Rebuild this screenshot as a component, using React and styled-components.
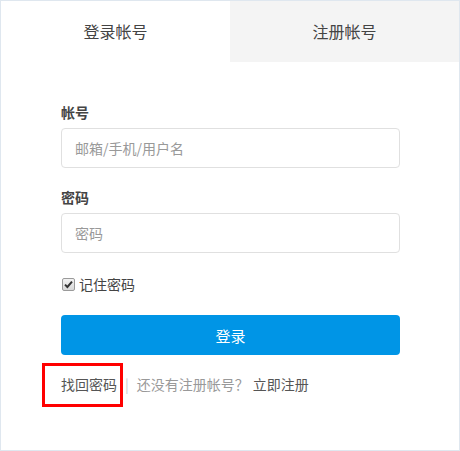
import React from 'react'
import styled, { createGlobalStyle } from 'styled-components'

const Global = createGlobalStyle`
    html, body { margin: 0; padding: 0; background: #fff; }
    body { font-family: "Noto Sans CJK SC", "Noto Sans", sans-serif; }
    * { box-sizing: border-box; }
`

export default function App() {
    return (
        <>
            <Global />
            <Panel>
                <Tabs>
                    <Tab active>登录帐号</Tab>
                    <Tab>注册帐号</Tab>
                </Tabs>
                <Form>
                    <Label>帐号</Label>
                    <Input placeholder="邮箱/手机/用户名" />
                    <Label>密码</Label>
                    <Input type="password" placeholder="密码" />
                    <Remember>
                        <CheckBox>
                            <svg width="9" height="9" viewBox="0 0 9 9">
                                <path d="M1 4.6 L3.4 7 L8 1.6" fill="none" stroke="#333" strokeWidth="2" />
                            </svg>
                        </CheckBox>
                        记住密码
                    </Remember>
                    <Submit>登录</Submit>
                    <Links>
                        <Highlight />
                        <Link>找回密码</Link>
                        <Sep>|</Sep>
                        <Muted>还没有注册帐号？</Muted>
                        <Link>立即注册</Link>
                    </Links>
                </Form>
            </Panel>
        </>
    )
}

const Panel = styled.div`
    width: 460px;
    height: 451px;
    border: 1px solid #dfe7ef;
    background: #fff;
`
const Tabs = styled.div`
    display: grid;
    grid-template-columns: 229px 1fr;
    height: 61px;
`
const Tab = styled.div`
    display: flex;
    align-items: center;
    justify-content: center;
    font-size: 16px;
    color: #444;
    padding-bottom: 1px;
    background: ${({ active }) => (active ? '#fff' : '#f4f4f4')};
`
const Form = styled.div`
    display: flex;
    flex-direction: column;
    padding: 40px 59px 0 60px;
`
const Label = styled.div`
    font-size: 14px;
    font-weight: bold;
    color: #444;
    line-height: 20px;
    margin-bottom: 6px;
    &:not(:first-child) { margin-top: 19px; }
`
const Input = styled.input`
    height: 40px;
    border: 1px solid #e0e0e0;
    border-radius: 4px;
    padding: 0 13px;
    font-family: inherit;
    font-size: 14px;
    color: #333;
    outline: none;
    &::placeholder { color: #999; }
`
const Remember = styled.label`
    display: flex;
    align-items: center;
    gap: 4px;
    margin-top: 21px;
    height: 20px;
    line-height: 20px;
    font-size: 14px;
    color: #444;
`
const CheckBox = styled.span`
    display: flex;
    align-items: center;
    justify-content: center;
    width: 13px;
    height: 13px;
    margin-left: 1px;
    border: 1px solid #9a9a9a;
    border-radius: 2px;
    background: linear-gradient(#f2f2f2, #d8d8d8);
`
const Submit = styled.button`
    margin-top: 21px;
    height: 40px;
    border: none;
    border-radius: 4px;
    background: #0095e6;
    color: #fff;
    font-family: inherit;
    font-size: 15px;
`
const Links = styled.div`
    position: relative;
    display: flex;
    align-items: center;
    margin-top: 19px;
    height: 20px;
    line-height: 20px;
    font-size: 14px;
`
const Highlight = styled.div`
    position: absolute;
    left: -19px;
    top: -11px;
    width: 81px;
    height: 44px;
    border: 3px solid #ff0000;
`
const Link = styled.span`
    color: #555;
`
const Sep = styled.span`
    color: #ccc;
    margin: 0 8px;
`
const Muted = styled.span`
    color: #999;
    margin-right: 4px;
`
